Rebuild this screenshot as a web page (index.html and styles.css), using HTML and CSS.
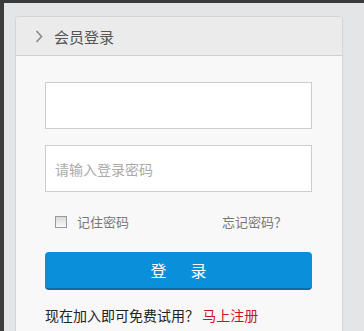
FILE: index.html
```html
<!DOCTYPE html>
<html lang="zh-CN">
<head>
  <meta charset="UTF-8" />
  <meta name="viewport" content="width=device-width, initial-scale=1.0"/>
  <title>会员登录</title>
  <link rel="stylesheet" href="styles.css">
</head>
<body>
  <div class="page">
    <div class="login-box">
      <div class="login-head">
        <svg class="arrow" width="8" height="13" viewBox="0 0 8 13">
          <polyline points="1.5,1 6.5,6.5 1.5,12" fill="none" stroke="#8a8a8a" stroke-width="1.6"/>
        </svg>
        <span>会员登录</span>
      </div>
      <div class="login-body">
        <input class="field" type="text">
        <input class="field" type="password" placeholder="请输入登录密码">
        <div class="remember-row">
          <label class="remember"><span class="check"></span>记住密码</label>
          <a class="forget" href="#">忘记密码？</a>
        </div>
        <button class="btn-login">登　录</button>
        <p class="signup">现在加入即可免费试用？ <a href="#">马上注册</a></p>
      </div>
    </div>
  </div>
</body>
</html>
```

FILE: styles.css
```css
html, body {
  margin: 0;
  height: 100%;
}
body {
  font-family: "Noto Sans CJK SC", "Liberation Sans", sans-serif;
  background: #e3e5e6;
  border-top: 3px solid #3a3a3a;
  border-left: 4px solid #3c3c3c;
  box-sizing: border-box;
  overflow: hidden;
}
.page {
  padding: 13px 0 0 11px;
}
.login-box {
  width: 328px;
  height: 330px;
  box-sizing: border-box;
  background: #f8f8f8;
  border: 1px solid #d4d4d4;
  border-radius: 4px 4px 0 0;
}
.login-head {
  display: flex;
  align-items: center;
  height: 38px;
  background: #ebebeb;
  border-bottom: 1px solid #cfcfcf;
  border-radius: 4px 4px 0 0;
  padding-left: 19px;
  color: #555;
  font-size: 15px;
}
.arrow {
  margin-right: 11px;
}
.login-body {
  padding: 26px 0 0 29px;
}
.field {
  display: block;
  width: 267px;
  height: 47px;
  box-sizing: border-box;
  border: 1px solid #cdcdcd;
  background: #fff;
  margin: 0 0 16px;
  padding: 0 9px;
  font-family: inherit;
  font-size: 14px;
  outline: none;
}
.field::placeholder {
  color: #aaa;
}
.remember-row {
  display: flex;
  justify-content: space-between;
  align-items: center;
  width: 232px;
  margin: 20px 0 0 10px;
  font-size: 13px;
  color: #777;
}
.remember {
  display: flex;
  align-items: center;
}
.check {
  width: 10px;
  height: 10px;
  border: 1px solid #9a9a9a;
  background: linear-gradient(#d8d8d8, #fafafa);
  margin-right: 10px;
}
.forget {
  color: #777;
  text-decoration: none;
}
.btn-login {
  display: block;
  width: 267px;
  height: 38px;
  margin-top: 21px;
  border: none;
  border-bottom: 2px solid #0b6ea8;
  border-radius: 4px;
  background: #0a8fda;
  color: #fff;
  font-family: inherit;
  font-size: 16px;
  letter-spacing: 4px;
  text-indent: 4px;
}
.signup {
  margin: 15px 0 0;
  font-size: 14px;
  color: #222;
}
.signup a {
  color: #c8141b;
  text-decoration: none;
}
```
